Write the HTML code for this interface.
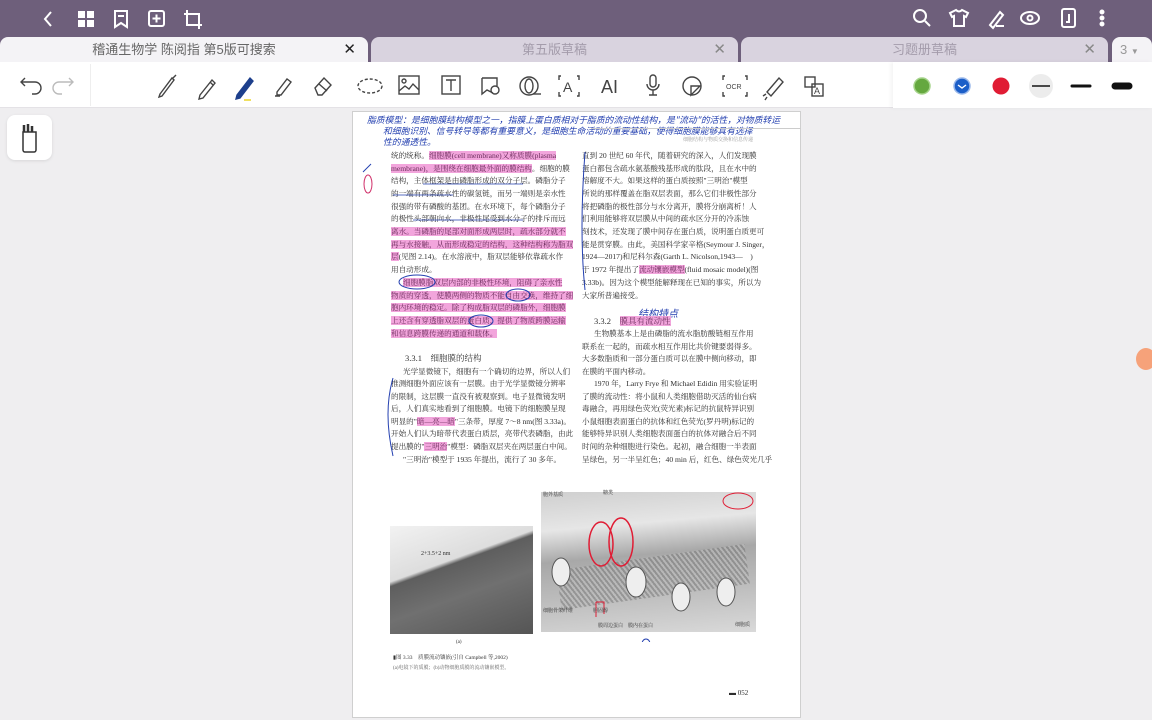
<!DOCTYPE html>
<html><head><meta charset="utf-8"><style>
*{margin:0;padding:0;box-sizing:border-box}
body{width:1152px;height:720px;overflow:hidden;background:#efeef0;font-family:"Liberation Sans","Noto Sans CJK SC",sans-serif;position:relative}
.top{position:absolute;left:0;top:0;width:1152px;height:62px;background:#6e5f7b}
.tab{position:absolute;top:37px;height:25px;border-radius:8px 8px 0 0;font-size:13px;text-align:center;line-height:25px;color:#a49cab}
.tab .x{position:absolute;right:12px;top:0;font-size:15px;color:#888}
.tb{position:absolute;left:0;top:62px;width:1152px;height:46px;background:#fff;border-bottom:1px solid #e4e2e6}
.page{position:absolute;left:352px;top:111px;width:449px;height:607px;background:#fff;border:1px solid #cfcfcf}
.t{position:absolute;font-family:"Liberation Serif","Noto Serif CJK SC",serif;font-size:7.6px;color:#2e2e2e;white-space:nowrap;line-height:12.7px}
.hl{background:#f2a5dc;color:#6a2b5a}
.hw{position:absolute;font-family:"Noto Sans CJK SC",sans-serif;color:#2440b0;font-size:8.8px;white-space:nowrap;font-style:italic}
svg{position:absolute}
</style></head><body>
<div class="top"></div>
<svg style="left:38px;top:8px" width="180" height="22" viewBox="0 0 180 22" fill="none" stroke="#fff" stroke-width="2">
<path d="M13 4l-6 7 6 7"/>
<rect x="40" y="3" width="7" height="7" fill="#fff" stroke="none"/><rect x="49" y="3" width="7" height="7" fill="#fff" stroke="none"/><rect x="40" y="12" width="7" height="7" fill="#fff" stroke="none"/><rect x="49" y="12" width="7" height="7" fill="#fff" stroke="none"/>
<path d="M77 3h12v16l-6-4-6 4z"/><path d="M80 8h6"/>
<rect x="111" y="3" width="15" height="15" rx="2"/><path d="M118.5 6.5v8M114.5 10.5h8"/>
<path d="M149 2v15h15M146 6h15v15"/>
</svg>
<svg style="left:910px;top:6px" width="200" height="24" viewBox="0 0 200 24" fill="none" stroke="#fff" stroke-width="2">
<circle cx="10" cy="10" r="6"/><path d="M15 15l5 5"/>
<path d="M46 4l-6 3 2 4 2-1v10h10V10l2 1 2-4-6-3q-3 3-6 0z"/>
<path d="M80 19l10-13 3 3-10 13zM86 20h8"/>
<ellipse cx="120" cy="12" rx="9" ry="6"/><circle cx="120" cy="12" r="2.5"/>
<rect x="152" y="3" width="13" height="18" rx="2"/><path d="M159 8v8h-3"/>
<circle cx="192" cy="6" r="1.5" fill="#fff"/><circle cx="192" cy="12" r="1.5" fill="#fff"/><circle cx="192" cy="18" r="1.5" fill="#fff"/>
</svg>
<div class="tab" style="left:0;width:368px;background:#f4f3f6;color:#666;">稽通生物学 陈阅指 第5版可搜索<span class="x" style="color:#222">✕</span></div>
<div class="tab" style="left:371px;width:367px;background:#d9d3df">第五版草稿<span class="x">✕</span></div>
<div class="tab" style="left:741px;width:367px;background:#d9d3df">习题册草稿<span class="x">✕</span></div>
<div class="tab" style="left:1112px;width:40px;background:#f4f3f6;text-align:left;padding-left:8px;color:#999">3 <span style="font-size:8px">▼</span></div>
<div class="tb"></div>
<div style="position:absolute;left:90px;top:64px;width:1px;height:42px;background:#eee"></div>
<div style="position:absolute;left:893px;top:62px;width:259px;height:46px;background:#fff;box-shadow:-2px 0 4px rgba(0,0,0,.05)"></div>
<svg style="left:15px;top:72px" width="880" height="32" viewBox="0 0 880 32" fill="none" stroke="#444" stroke-width="1.4">
<path d="M6 10l-4 4 4 4M2 14h14a6 6 0 010 12h-3" transform="translate(4,-4)"/>
<path d="M60 10l4 4-4 4M64 14H50a6 6 0 000 12h3" stroke="#bbb" transform="translate(-6,-4)"/>
<path d="M145 22l12-16 2 2-12 16-3 1z"/><path d="M158 6l3-3"/>
<path d="M185 23l12-15 3 3-12 15-4 1zM195 10l3 3"/>
<path d="M222 23l13-17 3 3-13 17-4 1z" fill="#1d3f8c" stroke="#1d3f8c"/><path d="M229 28h7" stroke="#f0e060" stroke-width="2"/>
<path d="M262 20l10-13 4 3-10 13h-4zM260 24h5"/>
<path d="M300 16l9-10 7 7-9 10h-4z M304 12l8 7"/>
<ellipse cx="355" cy="14" rx="12" ry="7" stroke-dasharray="3 2"/>
<rect x="384" y="4" width="20" height="18"/><circle cx="389" cy="9" r="2"/><path d="M384 19l6-5 4 3 4-5 6 6"/>
<rect x="427" y="4" width="18" height="18"/><path d="M431 8h10M436 8v11"/>
<path d="M467 6h15v8M467 6v16l5-4 6 3"/><circle cx="480" cy="18" r="4"/>
<circle cx="514" cy="14" r="9"/><ellipse cx="514" cy="14" rx="4" ry="7"/><path d="M518 22h8"/>
<path d="M546 4h-2v4M562 4h2v4M546 24h-2v-4M562 24h2v-4"/><text x="548" y="20" font-size="14" fill="#444" stroke="none" font-family="Liberation Sans">A</text>
<text x="586" y="21" font-size="18" fill="#444" stroke="none" font-family="Liberation Sans">AI</text>
<rect x="635" y="3" width="6" height="12" rx="3"/><path d="M632 12a6 6 0 0012 0M638 18v5M634 23h8"/>
<circle cx="677" cy="14" r="9"/><path d="M676 23l9-9-9 0z" fill="#fff"/>
<path d="M710 4h-2v4M730 4h2v4M710 24h-2v-4M730 24h2v-4"/><text x="711" y="17" font-size="7" fill="#444" stroke="none" font-family="Liberation Sans">OCR</text>
<path d="M752 20l12-14 4 4-12 14zM748 24l3-2M750 28l2-3"/>
<rect x="790" y="5" width="10" height="10"/><rect x="797" y="12" width="11" height="12"/><text x="799" y="22" font-size="9" fill="#444" stroke="none" font-family="Liberation Sans">A</text>
</svg>
<svg style="left:900px;top:72px" width="250" height="28" viewBox="0 0 250 28">
<circle cx="22" cy="14" r="8" fill="#65a83f" stroke="#a5d38a" stroke-width="1.5"/>
<circle cx="62" cy="14" r="8" fill="#1b5ec8" stroke="#9ab8ea" stroke-width="1.5"/><path d="M58 13l4 3 4-3" stroke="#fff" stroke-width="1.4" fill="none"/>
<circle cx="101" cy="14" r="8.5" fill="#e01c34"/>
<circle cx="141" cy="14" r="12" fill="#ececec"/><path d="M132 14h18" stroke="#111" stroke-width="1.5"/>
<path d="M172 14h18" stroke="#111" stroke-width="3" stroke-linecap="round"/>
<path d="M215 14h14" stroke="#111" stroke-width="7" stroke-linecap="round"/>
</svg>
<div style="position:absolute;left:7px;top:115px;width:45px;height:45px;background:#fff;border-radius:8px;box-shadow:0 1px 3px rgba(0,0,0,.1)"></div>
<svg style="left:20px;top:122px" width="20" height="32" viewBox="0 0 20 32" fill="none" stroke="#333" stroke-width="1.5"><path d="M3 10h13v18a2 2 0 01-2 2H5a2 2 0 01-2-2z"/><path d="M4 3v7M8 2v8M12 4v6" stroke-width="2.5"/></svg>
<div style="position:absolute;left:1136px;top:348px;width:20px;height:22px;border-radius:50%;background:#f6a27a"></div>

<div class="page">
<div class="hw" style="left:14px;top:1px">脂质模型：是细胞膜结构模型之一，指膜上蛋白质相对于脂质的流动性结构，是"流动"的活性，对物质转运</div>
<div class="hw" style="left:30px;top:12px">和细胞识别、信号转导等都有重要意义，是细胞生命活动的重要基础，使得细胞膜能够具有选择</div>
<div class="hw" style="left:30px;top:23px">性的通透性。</div>
<div style="position:absolute;left:238px;top:16px;width:210px;height:1px;background:#ccc"></div>
<div class="t" style="left:330px;top:23px;font-size:5px;color:#999">细胞结构与物质交换和信息传递</div>

<div class="t" style="left:38px;top:38px">统的统称。<span class="hl">细胞膜(cell membrane)又称质膜(plasma</span></div>
<div class="t" style="left:38px;top:51px"><span class="hl">membrane)，是围绕在细胞最外面的膜结构</span>。细胞的膜</div>
<div class="t" style="left:38px;top:63px">结构，主体框架是由磷脂形成的双分子层。磷脂分子</div>
<div class="t" style="left:38px;top:76px">的一端有两条疏水性的碳氢链，而另一端则是亲水性</div>
<div class="t" style="left:38px;top:89px">很强的带有磷酸的基团。在水环境下，每个磷脂分子</div>
<div class="t" style="left:38px;top:101px">的极性头部朝向水，非极性尾受到水分子的排斥而远</div>
<div class="t" style="left:38px;top:114px"><span class="hl">离水。当磷脂的尾部对面形成两层时，疏水部分就不</span></div>
<div class="t" style="left:38px;top:127px"><span class="hl">再与水接触，从而形成稳定的结构，这种结构称为脂双</span></div>
<div class="t" style="left:38px;top:139px"><span class="hl">层</span>(见图 2.14)。在水溶液中，脂双层能够依靠疏水作</div>
<div class="t" style="left:38px;top:152px">用自动形成。</div>
<div class="t" style="left:50px;top:165px"><span class="hl">细胞膜脂双层内部的非极性环境，阻碍了亲水性</span></div>
<div class="t" style="left:38px;top:178px"><span class="hl">物质的穿透，使膜两侧的物质不能自由交换，维持了细</span></div>
<div class="t" style="left:38px;top:190px"><span class="hl">胞内环境的稳定。除了构成脂双层的磷脂外，细胞膜</span></div>
<div class="t" style="left:38px;top:203px"><span class="hl">上还含有穿透脂双层的蛋白质，提供了物质跨膜运输</span></div>
<div class="t" style="left:38px;top:216px"><span class="hl">和信息跨膜传递的通道和载体。</span></div>
<div class="t" style="left:52px;top:240px;font-size:8.5px;color:#333">3.3.1　细胞膜的结构</div>
<div class="t" style="left:50px;top:254px">光学显微镜下，细胞有一个确切的边界，所以人们</div>
<div class="t" style="left:38px;top:266px">推测细胞外面应该有一层膜。由于光学显微镜分辨率</div>
<div class="t" style="left:38px;top:279px">的限制，这层膜一直没有被观察到。电子显微镜发明</div>
<div class="t" style="left:38px;top:291px">后，人们真实地看到了细胞膜。电镜下的细胞膜呈现</div>
<div class="t" style="left:38px;top:304px">明显的"<span class="hl">暗—亮—暗</span>"三条带，厚度 7～8 nm(图 3.33a)。</div>
<div class="t" style="left:38px;top:316px">开始人们认为暗带代表蛋白质层，亮带代表磷脂，由此</div>
<div class="t" style="left:38px;top:329px">提出膜的"<span class="hl">三明治</span>"模型：磷脂双层夹在两层蛋白中间。</div>
<div class="t" style="left:50px;top:342px">"三明治"模型于 1935 年提出，流行了 30 多年。</div>

<div class="t" style="left:229px;top:38px">直到 20 世纪 60 年代，随着研究的深入，人们发现膜</div>
<div class="t" style="left:229px;top:51px">蛋白都包含疏水氨基酸残基形成的肽段，且在水中的</div>
<div class="t" style="left:229px;top:63px">溶解度不大。如果这样的蛋白质按照"三明治"模型</div>
<div class="t" style="left:229px;top:76px">所说的那样覆盖在脂双层表面，那么它们非极性部分</div>
<div class="t" style="left:229px;top:89px">将把磷脂的极性部分与水分离开，膜将分崩离析！人</div>
<div class="t" style="left:229px;top:101px">们利用能够将双层膜从中间的疏水区分开的冷冻蚀</div>
<div class="t" style="left:229px;top:114px">刻技术，还发现了膜中间存在蛋白质，说明蛋白质更可</div>
<div class="t" style="left:229px;top:127px">能是贯穿膜。由此，美国科学家辛格(Seymour J. Singer，</div>
<div class="t" style="left:229px;top:139px">1924—2017)和尼科尔森(Garth L. Nicolson,1943—　)</div>
<div class="t" style="left:229px;top:152px">于 1972 年提出了<span class="hl">流动镶嵌模型</span>(fluid mosaic model)(图</div>
<div class="t" style="left:229px;top:165px">3.33b)。因为这个模型能解释现在已知的事实，所以为</div>
<div class="t" style="left:229px;top:178px">大家所普遍接受。</div>
<div class="hw" style="left:285px;top:193px;font-size:10px">结构特点</div>
<div class="t" style="left:241px;top:203px;font-size:8.5px;color:#333">3.3.2　<span class="hl">膜具有流动性</span></div>
<div class="t" style="left:241px;top:216px">生物膜基本上是由磷脂的流水脂肪酸链相互作用</div>
<div class="t" style="left:229px;top:229px">联系在一起的，而疏水相互作用比共价键要弱得多。</div>
<div class="t" style="left:229px;top:241px">大多数脂质和一部分蛋白质可以在膜中侧向移动，即</div>
<div class="t" style="left:229px;top:254px">在膜的平面内移动。</div>
<div class="t" style="left:241px;top:266px">1970 年，Larry Frye 和 Michael Edidin 用实验证明</div>
<div class="t" style="left:229px;top:279px">了膜的流动性：将小鼠和人类细胞借助灭活的仙台病</div>
<div class="t" style="left:229px;top:291px">毒融合，再用绿色荧光(荧光素)标记的抗鼠特异识别</div>
<div class="t" style="left:229px;top:304px">小鼠细胞表面蛋白的抗体和红色荧光(罗丹明)标记的</div>
<div class="t" style="left:229px;top:316px">能够特异识别人类细胞表面蛋白的抗体对融合后不同</div>
<div class="t" style="left:229px;top:329px">时间的杂种细胞进行染色。起初，融合细胞一半表面</div>
<div class="t" style="left:229px;top:342px">呈绿色，另一半呈红色；40 min 后，红色、绿色荧光几乎</div>

<svg style="left:0;top:0" width="449" height="607">
<path d="M232 40 Q226 120 232 178" stroke="#2440b0" fill="none" stroke-width="1"/>
<path d="M40 266 Q30 300 40 344" stroke="#2440b0" fill="none" stroke-width="1"/>
<ellipse cx="15" cy="72" rx="4" ry="9" stroke="#d0306a" fill="none"/>
<path d="M10 60l8-8" stroke="#2440b0"/>
<ellipse cx="64" cy="170" rx="18" ry="7" stroke="#2440b0" fill="none"/>
<ellipse cx="165" cy="183" rx="12" ry="6" stroke="#2440b0" fill="none"/>
<ellipse cx="128" cy="209" rx="12" ry="6" stroke="#2440b0" fill="none"/>
<path d="M70 72h100M40 83h60M60 108h110" stroke="#2440b0" stroke-width=".8"/>
</svg>

<div style="position:absolute;left:37px;top:414px;width:143px;height:108px;background:linear-gradient(160deg,#f2f2f2 0%,#ddd 35%,#5e5e5e 38%,#707070 60%,#555 100%)"></div>
<div class="t" style="left:68px;top:436px;font-size:6px">2+3.5+2 nm</div>
<div class="t" style="left:103px;top:525px;font-size:5px">(a)</div>
<div style="position:absolute;left:188px;top:380px;width:215px;height:140px;background:linear-gradient(175deg,#cfcfcf 0%,#e6e6e6 25%,#a8a8a8 45%,#bdbdbd 70%,#d9d9d9 100%)"></div>
<div style="position:absolute;left:205px;top:445px;width:190px;height:40px;background:repeating-linear-gradient(60deg,#777 0 2px,#bbb 2px 4px);opacity:.55;transform:rotate(-8deg)"></div>
<svg style="left:188px;top:380px" width="215" height="150">
<ellipse cx="20" cy="80" rx="9" ry="14" fill="#eee" stroke="#555"/>
<ellipse cx="95" cy="90" rx="10" ry="15" fill="#eee" stroke="#555"/>
<ellipse cx="140" cy="105" rx="9" ry="14" fill="#eee" stroke="#555"/>
<ellipse cx="185" cy="100" rx="9" ry="14" fill="#eee" stroke="#555"/>
<ellipse cx="60" cy="52" rx="12" ry="22" stroke="#e01c34" fill="none" stroke-width="1.5"/>
<ellipse cx="80" cy="50" rx="12" ry="24" stroke="#e01c34" fill="none" stroke-width="1.5"/>
<ellipse cx="197" cy="9" rx="15" ry="8" stroke="#e01c34" fill="none"/>
<ellipse cx="105" cy="152" rx="4" ry="5" stroke="#2440b0" fill="none"/>
<path d="M55 110v15M55 110h8v12" stroke="#e01c34" fill="none"/>
</svg>
<div class="t" style="left:190px;top:378px;font-size:5px">胞外基质</div>
<div class="t" style="left:250px;top:376px;font-size:5px">糖类</div>
<div class="t" style="left:190px;top:494px;font-size:5px">细胞骨架纤维</div>
<div class="t" style="left:240px;top:494px;font-size:5px">胆固醇</div>
<div class="t" style="left:245px;top:509px;font-size:5px">膜周边蛋白　膜内在蛋白</div>
<div class="t" style="left:382px;top:508px;font-size:5px">细胞质</div>
<div class="t" style="left:40px;top:540px;font-size:5.5px;color:#333">▮图 3.33　质膜流动镶嵌(引自 Campbell 等,2002)</div>
<div class="t" style="left:40px;top:551px;font-size:5px;color:#666">(a)电镜下的质膜；(b)动物细胞质膜的流动镶嵌模型。</div>
<div class="t" style="left:376px;top:575px;font-size:7px">▬ 052</div>
</div>
</body></html>
